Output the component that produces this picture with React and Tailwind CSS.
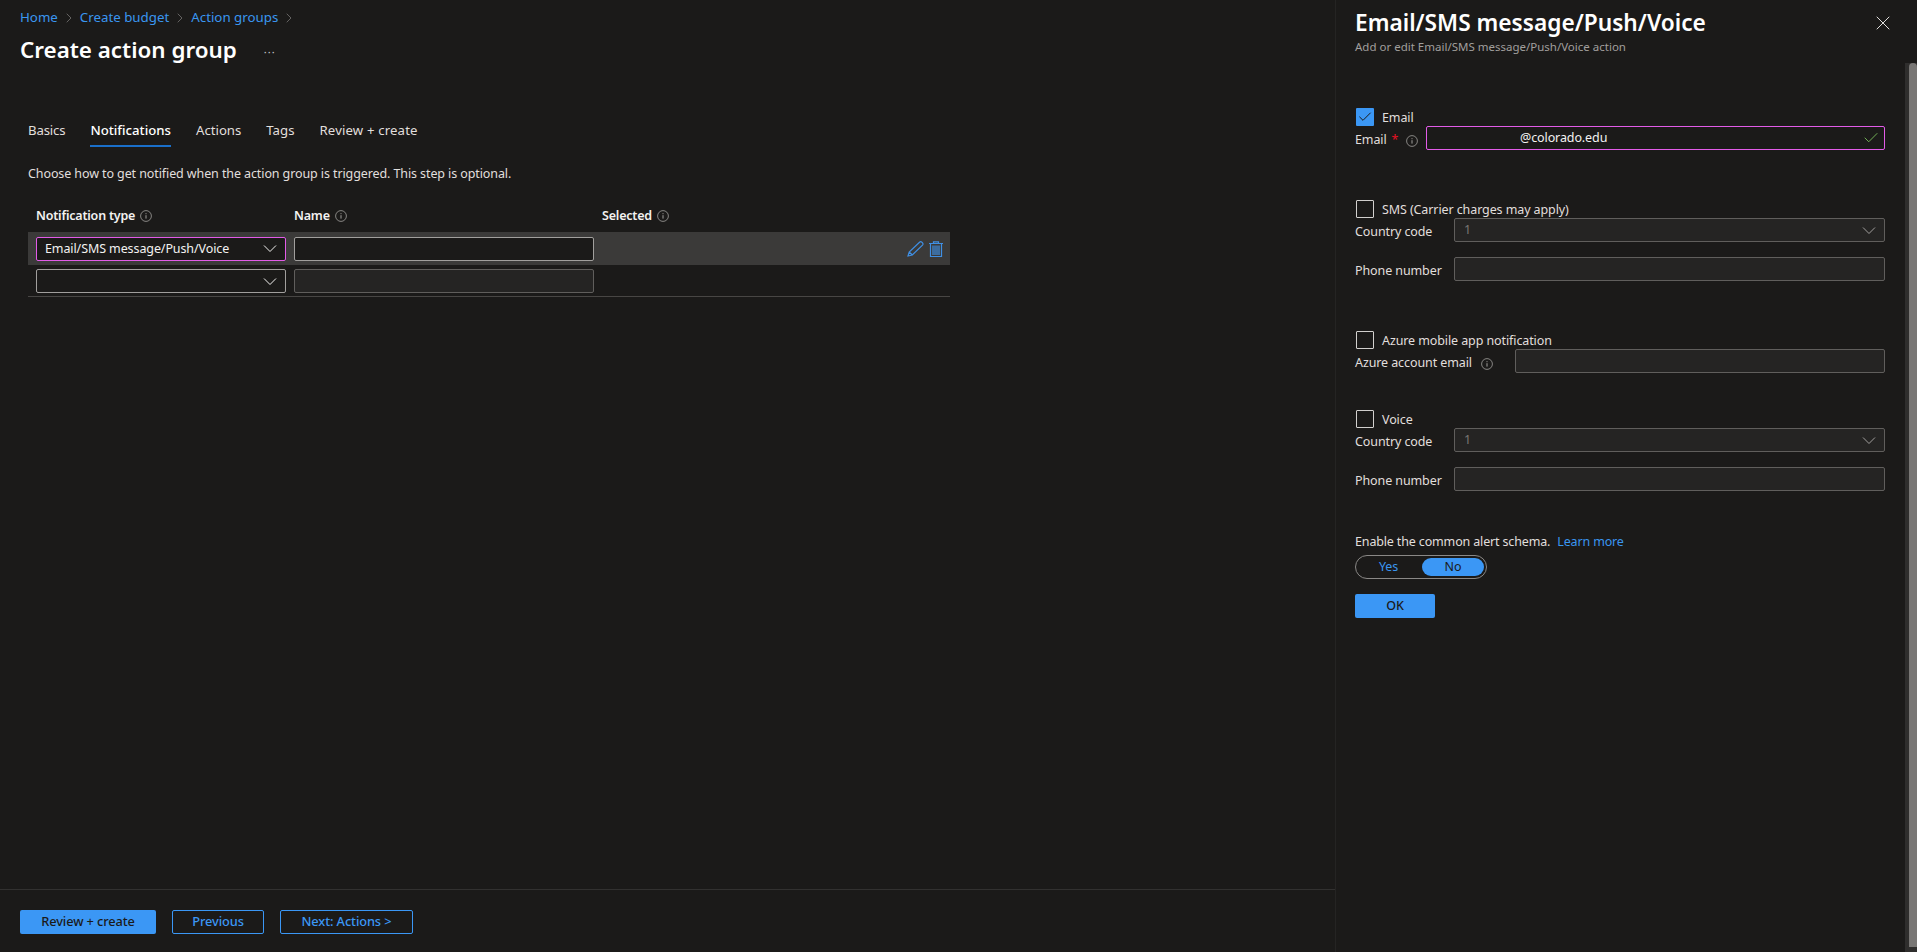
import { ChevronRight, Check, X } from 'lucide-react'

const FONT = "font-['Noto_Sans',sans-serif]"
const BODY = 'text-[12.5px] tracking-[-0.1px] pt-px'
const LABEL = 'text-[12.5px] tracking-[-0.1px] pt-[5px] text-[#e1dfdd]'

// Info-kreisje naast labels
function InfoIcon({ className = '' }) {
  return (
    <svg className={`w-3 h-3 shrink-0 text-[#a19f9d] ${className}`} viewBox="0 0 12 12" fill="none" stroke="currentColor">
      <circle cx="6" cy="6" r="5.4" strokeWidth="0.8" />
      <path d="M6 5.2v3.4M6 3.2v1" strokeWidth="1" />
    </svg>
  )
}

function Chevron({ className = '' }) {
  return (
    <svg className={`w-[14px] h-[9px] shrink-0 ${className}`} viewBox="0 0 14 9" fill="none" stroke="currentColor" strokeWidth="1">
      <path d="M1 1.5l6 6 6-6" />
    </svg>
  )
}

function CheckBox({ checked, label }) {
  return (
    <div className="flex items-center h-[18px] gap-2 ml-px">
      <span className={`w-[18px] h-[18px] flex items-center justify-center rounded-[1px] ${checked ? 'bg-[#3b97f5]' : 'border border-[#d2d0ce]'}`}>
        {checked && <Check className="w-4 h-4 text-[#1b1a19]" strokeWidth={1.5} />}
      </span>
      <span className={`${BODY} leading-[18px] text-[#e1dfdd]`}>{label}</span>
    </div>
  )
}

function DisabledField({ label, value, select }) {
  return (
    <div className="flex items-center h-6">
      <span className={`w-[99px] shrink-0 ${LABEL}`}>{label}</span>
      <div className="flex-1 h-6 flex items-center justify-between pl-[9px] pr-[8px] bg-[#252423] border border-[#605e5c] rounded-[2px]">
        <span className={`${BODY} text-[#797775]`}>{value}</span>
        {select && <Chevron className="text-[#a19f9d]" />}
      </div>
    </div>
  )
}

export default function App() {
  return (
    <div className={`${FONT} flex w-[1917px] h-[952px] overflow-hidden bg-[#1b1a19] text-[#f3f2f1]`}>

      {/* Linkerdeel: formulier */}
      <div className="w-[1335px] flex flex-col">
        <main className="flex-1 px-5">
          <nav className="flex items-center h-[20px] mt-2 text-[13.3px] text-[#3a96f0]">
            <a>Home</a>
            <ChevronRight className="w-4 h-4 mx-[3px] text-[#8a8886]" strokeWidth={1} />
            <a>Create budget</a>
            <ChevronRight className="w-4 h-4 mx-[3px] text-[#8a8886]" strokeWidth={1} />
            <a>Action groups</a>
            <ChevronRight className="w-4 h-4 mx-[3px] text-[#8a8886]" strokeWidth={1} />
          </nav>

          <div className="flex items-center h-[34px] mt-[6px]">
            <h1 className="text-[22.4px] font-semibold text-white leading-none pb-[2px]">Create action group</h1>
            <span className="ml-[27px] text-[11px] tracking-[1px] text-[#c8c6c4] leading-none">···</span>
          </div>

          <div className="flex gap-[25px] ml-2 mt-[49px] h-[37px] text-[13.2px] text-[#e1dfdd]">
            <span className="leading-[26px] tracking-[-0.15px]">Basics</span>
            <span className="leading-[26px] font-medium text-white border-b-2 border-[#1a6fc9] h-[30px]">Notifications</span>
            <span className="leading-[26px]">Actions</span>
            <span className="leading-[26px]">Tags</span>
            <span className="leading-[26px] tracking-[0.15px]">Review + create</span>
          </div>

          <p className={`ml-2 mt-[9px] ${BODY} leading-5 text-[#e1dfdd]`}>
            Choose how to get notified when the action group is triggered. This step is optional.
          </p>

          {/* Notificatie-tabel */}
          <div className="ml-2 w-[922px] mt-[21px]">
            <div className="flex items-center h-[21px] pl-2 text-[12.5px] tracking-[-0.2px] pt-px font-semibold text-[#f3f2f1]">
              <span className="w-[258px] flex items-center gap-[5px]">Notification type <InfoIcon /></span>
              <span className="w-[308px] flex items-center gap-[5px]">Name <InfoIcon /></span>
              <span className="flex items-center gap-[5px]">Selected <InfoIcon /></span>
            </div>

            <div className="flex items-center h-[33px] mt-[6px] pl-2 bg-[#3b3a39]">
              <div className="w-[250px] h-6 flex items-center justify-between pl-2 pr-[8px] bg-[#1b1a19] border border-[#e25be8] rounded-[2px]">
                <span className={`${BODY} text-[#f3f2f1]`}>Email/SMS message/Push/Voice</span>
                <Chevron className="text-[#f3f2f1]" />
              </div>
              <div className="w-[300px] h-6 ml-2 bg-[#1b1a19] border border-[#a19f9d] rounded-[2px]" />
              <div className="ml-auto flex items-center gap-[5px] pr-[7px] text-[#3f8fe4]">
                <svg className="w-[17px] h-4" viewBox="0 0 17 16" fill="none" stroke="currentColor" strokeWidth="1.2">
                  <path d="M1 15l1.2-4L12.5 1.2c.7-.6 1.7-.6 2.4 0l.6.6c.6.7.6 1.6 0 2.3L5.3 14 1 15zM2.2 11l3.1 3" />
                </svg>
                <svg className="w-[14px] h-4" viewBox="0 0 14 16" fill="none" stroke="currentColor" strokeWidth="1.2">
                  <path d="M0 2.5h14M4.5 2.5V.8h5v1.7M1.5 2.5v13h11v-13" />
                  <rect x="3" y="4.5" width="8" height="9.5" fill="currentColor" fillOpacity="0.6" stroke="none" />
                </svg>
              </div>
            </div>

            <div className="flex items-start h-8 pt-1 pl-2 border-b border-[#484644]">
              <div className="w-[250px] h-6 flex items-center justify-end pr-[8px] border border-[#a19f9d] rounded-[2px]">
                <Chevron className="text-[#f3f2f1]" />
              </div>
              <div className="w-[300px] h-6 ml-2 bg-[#252423] border border-[#605e5c] rounded-[2px]" />
            </div>
          </div>
        </main>

        <footer className="h-[63px] flex items-start gap-4 pl-5 pt-[20px] border-t border-[#323130] text-[12.8px] tracking-[-0.1px] font-medium">
          <button className="w-[136px] h-6 rounded-[2px] bg-[#3b97f5] text-[#1b1a19]">Review + create</button>
          <button className="w-[92px] h-6 rounded-[2px] border border-[#3b97f5] text-[#3b97f5]">Previous</button>
          <button className="w-[133px] h-6 rounded-[2px] border border-[#3b97f5] text-[#3b97f5]">Next: Actions &gt;</button>
        </footer>
      </div>

      {/* Context-paneel rechts */}
      <aside className="flex-1 flex border-l border-[#252423]">
        <div className="flex-1 min-w-0 pl-[19px] pr-5">
          <div className="flex justify-between pt-[7px] h-[60px]">
            <div>
              <h2 className="text-[22.7px] leading-[32px] font-semibold text-white">Email/SMS message/Push/Voice</h2>
              <p className="text-[11.5px] leading-4 text-[#a19f9d]">Add or edit Email/SMS message/Push/Voice action</p>
            </div>
            <X className="w-6 h-6 mt-[4px] -mr-[10px] text-[#e1dfdd]" strokeWidth={1} />
          </div>

          <div className="mt-[48px]">
            <CheckBox checked label="Email" />
            <div className="flex items-center h-6">
              <span className={`w-[71px] shrink-0 flex items-center ${LABEL}`}>
                Email <span className="ml-[5px] text-[#e81123]">*</span>
                <InfoIcon className="ml-[8px]" />
              </span>
              <div className="flex-1 h-6 flex items-center justify-between pl-[93px] pr-[4px] bg-[#1b1a19] border border-[#e25be8] rounded-[2px]">
                <span className={`${BODY} text-[#f3f2f1]`}>@colorado.edu</span>
                <Check className="w-[18px] h-[18px] text-[#7cc05c]" strokeWidth={1.2} />
              </div>
            </div>
          </div>

          <div className="mt-[50px]">
            <CheckBox label="SMS (Carrier charges may apply)" />
            <DisabledField label="Country code" value="1" select />
            <div className="mt-[15px]">
              <DisabledField label="Phone number" />
            </div>
          </div>

          <div className="mt-[50px]">
            <CheckBox label="Azure mobile app notification" />
            <div className="flex items-center h-6">
              <span className={`w-[160px] shrink-0 flex items-center ${LABEL}`}>
                Azure account email <InfoIcon className="ml-[9px]" />
              </span>
              <div className="flex-1 h-6 bg-[#252423] border border-[#605e5c] rounded-[2px]" />
            </div>
          </div>

          <div className="mt-[37px]">
            <CheckBox label="Voice" />
            <DisabledField label="Country code" value="1" select />
            <div className="mt-[15px]">
              <DisabledField label="Phone number" />
            </div>
          </div>

          <p className="mt-[40px] h-5 text-[12.5px] tracking-[-0.15px] pt-px leading-5 text-[#e1dfdd]">
            Enable the common alert schema.<a className="ml-[7px] text-[#3a96f0]">Learn more</a>
          </p>

          <div className="mt-[4px] w-[132px] h-6 flex items-center p-[2px] border border-[#8a8886] rounded-full text-[12.5px] tracking-[-0.1px]">
            <span className="flex-1 text-center pr-[3px] text-[#3a96f0]">Yes</span>
            <span className="w-[62px] h-[18px] flex items-center justify-center rounded-full bg-[#3b97f5] text-[#1b1a19]">No</span>
          </div>

          <button className={`block mt-[15px] w-[80px] h-6 rounded-[2px] bg-[#3b97f5] ${BODY} font-medium text-[#1b1a19]`}>OK</button>
        </div>

        {/* Scrollbalk */}
        <div className="w-3 mt-[63px] bg-[#2f2e2d] flex justify-end">
          <div className="w-2 h-[884px] bg-[#797775] rounded-t-[4px]" />
        </div>
      </aside>
    </div>
  )
}
